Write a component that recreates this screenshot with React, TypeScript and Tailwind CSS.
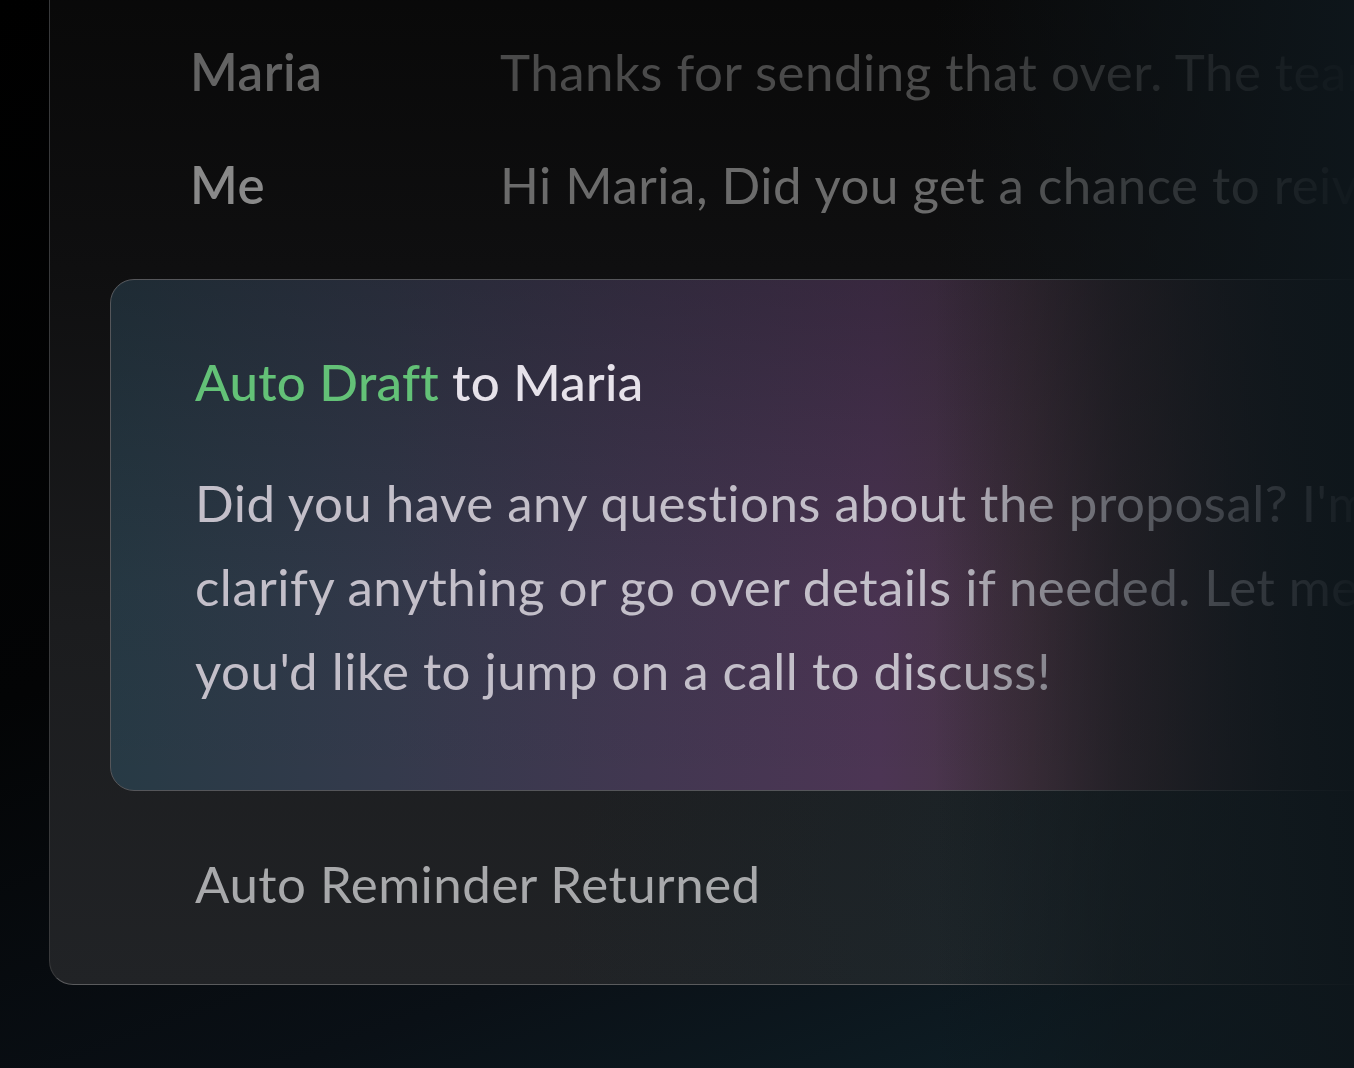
import React from 'react';

const font = { fontFamily: 'Lato, "Noto Sans", sans-serif' };

const Row = ({ name, text, nameCls, textCls }: any) => (
  <div className="flex leading-[84px] text-[51px] tracking-[0.5px] whitespace-nowrap">
    <span className={`w-[310px] shrink-0 font-semibold ${nameCls}`}>{name}</span>
    <span className={textCls}>{text}</span>
  </div>
);

export default function App() {
  return (
    <div
      style={font}
      className="relative h-[1068px] w-full overflow-hidden bg-[linear-gradient(160deg,#000000_0%,#030405_45%,#0a1016_75%,#10232b_100%)]"
    >
      <div className="flex pl-[49px]">
        <div className="w-[1600px] shrink-0 -mt-[40px] rounded-bl-[24px] border border-[#38393b] border-b-[#5a5b5d] bg-[radial-gradient(ellipse_at_85%_100%,rgba(20,44,52,0.55)_0%,rgba(20,44,52,0)_45%),linear-gradient(180deg,#080808_0%,#0f0f10_30%,#1b1c1e_65%,#212326_100%)]">
          <div className="flex flex-col gap-[29px] pl-[140px] pt-[69px]">
            <Row name="Maria" text="Thanks for sending that over. The team will review it" nameCls="text-[#636363]" textCls="text-[#4a4a4a]" />
            <Row name="Me" text="Hi Maria, Did you get a chance to reivew the proposal" nameCls="text-[#898989]" textCls="text-[#6b6b6b]" />
          </div>

          <div className="ml-[60px] mt-[52px] h-[512px] rounded-l-[24px] border border-[#55565a] bg-[linear-gradient(90deg,#273a45_0%,#343a4c_18%,#423751_35%,#4c3554_50%,#473442_60%,#3a2e36_68%,#25242a_76%,#171b20_85%,#14191d_100%)]">
            <div className="h-full rounded-l-[24px] bg-[linear-gradient(180deg,rgba(10,10,14,0.3)_0%,rgba(10,10,14,0.06)_60%,rgba(10,10,14,0)_100%)] pl-[84px] pt-[60px]">
              <div className="text-[51px] leading-[84px] font-medium tracking-[0.3px] whitespace-nowrap">
                <span className="text-[#63c177]">Auto Draft</span>
                <span className="text-[#e6e2ea]"> to Maria</span>
              </div>
              <p className="mt-[37px] text-[51px] leading-[84px] tracking-[0.5px] whitespace-nowrap text-[#c3bfc9]">
                Did you have any questions about the proposal? I'm happy to
                <br />
                clarify anything or go over details if needed. Let me know if
                <br />
                you'd like to jump on a call to discuss!
              </p>
            </div>
          </div>

          <div className="pl-[145px] pt-[51px] pb-[58px] text-[51px] leading-[84px] tracking-[0.5px] text-[#a8a9ab] whitespace-nowrap">
            Auto Reminder Returned
          </div>
        </div>
      </div>

      {/* right edge fade over the content */}
      <div className="pointer-events-none absolute inset-y-0 right-0 w-[420px] bg-[linear-gradient(90deg,rgba(14,20,24,0)_0%,rgba(14,20,24,0.55)_45%,rgba(14,22,27,0.97)_100%)]" />
    </div>
  );
}
